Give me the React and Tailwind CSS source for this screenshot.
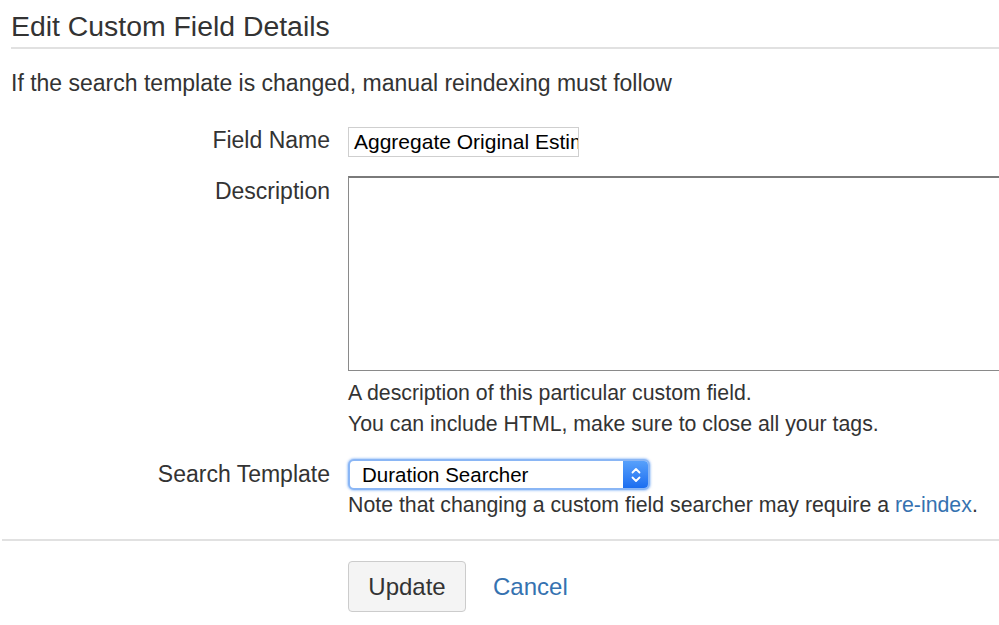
import React from 'react';

export default function App() {
  return (
    <div className="w-[999px] h-[625px] overflow-hidden bg-white text-[#333] font-['Liberation_Sans',Arial,sans-serif]">
      {/* Page header */}
      <div className="ml-[11px]">
        <h2 className="pt-[10px] pb-[5px] text-[28.4px] leading-[32px] font-normal border-b-2 border-[#e1e1e1]">
          Edit Custom Field Details
        </h2>
        <p className="mt-[20px] text-[23px] leading-[28px]">
          If the search template is changed, manual reindexing must follow
        </p>
      </div>

      {/* Form */}
      <div className="mt-[30px] grid grid-cols-[330px_1fr] gap-x-[18px] text-[23px]">
        <label className="text-right leading-[26px]">Field Name</label>
        <div className="h-[30px] w-[231px] overflow-hidden border border-[#cfcfcf] bg-white px-[5px] text-[21px] leading-[28px] text-black whitespace-nowrap">
          Aggregate Original Estimate
        </div>

        <label className="mt-[19px] text-right leading-[30px]">Description</label>
        <div className="mt-[19px]">
          <div className="h-[195px] w-[720px] border border-[#8a8a8a] border-t-2 border-t-[#7a7a7a] bg-white" />
          <div className="mt-[7px] text-[21.3px] leading-[31px]">
            <div>A description of this particular custom field.</div>
            <div>You can include HTML, make sure to close all your tags.</div>
          </div>
        </div>

        <label className="mt-[19px] text-right leading-[31px]">Search Template</label>
        <div className="mt-[19px]">
          <div className="flex h-[31px] w-[302px] items-stretch rounded-[6px] border-2 border-[#8ab6f5] bg-white shadow-[0_0_2px_1px_rgba(100,160,245,0.5)]">
            <span className="flex-1 pl-[12px] text-[20.5px] leading-[27px] text-black">Duration Searcher</span>
            <span className="flex w-[25px] items-center justify-center rounded-r-[4px] bg-gradient-to-b from-[#57a0fb] to-[#1b6df0]">
              <svg width="12" height="20" viewBox="0 0 12 20" fill="none" stroke="white" strokeWidth="1.8" strokeLinecap="round" strokeLinejoin="round">
                <path d="M2.5 7.5 L6 4 L9.5 7.5" />
                <path d="M2.5 12.5 L6 16 L9.5 12.5" />
              </svg>
            </span>
          </div>
          <div className="text-[21.3px] leading-[30px] whitespace-nowrap">
            Note that changing a custom field searcher may require a{' '}
            <a href="#" className="text-[#3572b0]">re-index</a>.
          </div>
        </div>
      </div>

      {/* Footer actions */}
      <div className="ml-[2px] mt-[19px] h-[2px] bg-[#e1e1e1]" />
      <div className="mt-[20px] flex items-center pl-[348px]">
        <button className="h-[51px] w-[118px] rounded-[4px] border border-[#cccccc] bg-[#f4f4f4] text-[24px] text-[#333]">
          Update
        </button>
        <a href="#" className="ml-[27px] text-[24px] text-[#3572b0]">Cancel</a>
      </div>
    </div>
  );
}
